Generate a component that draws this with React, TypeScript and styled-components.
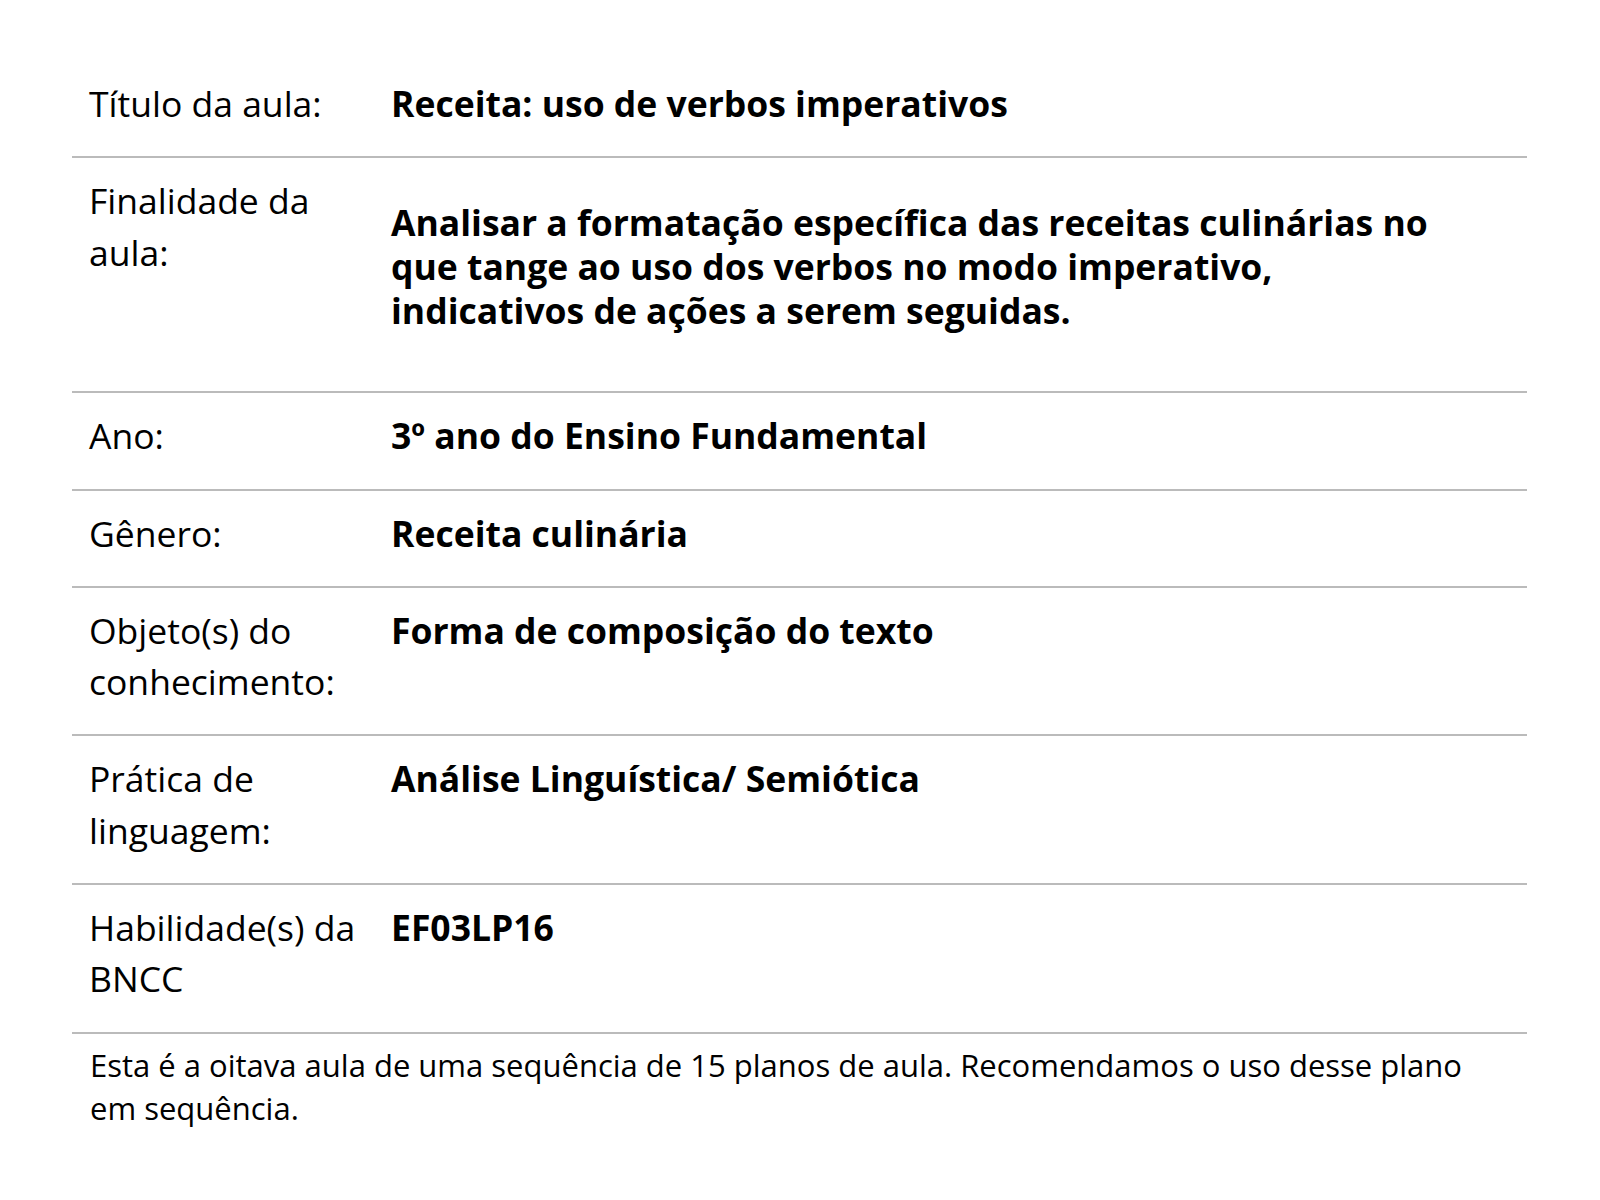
import styled, { createGlobalStyle } from 'styled-components';

type RowType = {
  label: string;
  value: string;
  spaced?: boolean;
};

const rows: RowType[] = [
  { label: 'Título da aula:', value: 'Receita: uso de verbos imperativos' },
  {
    label: 'Finalidade da aula:',
    value:
      'Analisar a formatação específica das receitas culinárias no que tange ao uso dos verbos no modo imperativo, indicativos de ações a serem seguidas.',
    spaced: true,
  },
  { label: 'Ano:', value: '3º ano do Ensino Fundamental' },
  { label: 'Gênero:', value: 'Receita culinária' },
  { label: 'Objeto(s) do conhecimento:', value: 'Forma de composição do texto' },
  { label: 'Prática de linguagem:', value: 'Análise Linguística/ Semiótica' },
  { label: 'Habilidade(s) da BNCC', value: 'EF03LP16' },
];

const GlobalStyle = createGlobalStyle`
  body {
    margin: 0;
    background: #ffffff;
    color: #000000;
    font-family: "Open Sans", "Noto Sans", sans-serif;
  }
`;

const App = () => {
  return (
    <>
      <GlobalStyle />
      <Page>
        <PlanTable>
          {rows.map(({ label, value, spaced }) => (
            <Row key={label}>
              <Label>{label}</Label>
              <Value $spaced={spaced}>{value}</Value>
            </Row>
          ))}
        </PlanTable>
        <Note>
          Esta é a oitava aula de uma sequência de 15 planos de aula. Recomendamos o uso desse
          plano em sequência.
        </Note>
      </Page>
    </>
  );
};

const Page = styled.main`
  padding: 61px 73px 60px 72px;
`;

const PlanTable = styled.section`
  display: flex;
  flex-direction: column;
`;

const Row = styled.div`
  display: grid;
  grid-template-columns: 303px 1fr;
  border-bottom: 2px solid #bbbbbb;
`;

const Label = styled.div`
  padding: 17px 12px 27px 17px;
  font-size: 35.5px;
  line-height: 51.3px;
  font-weight: 400;
`;

const Value = styled.div<{ $spaced?: boolean }>`
  padding: ${({ $spaced }) => ($spaced ? '42px 80px 59px 16px' : '20px 80px 27px 16px')};
  font-size: 35.5px;
  line-height: 44px;
  font-weight: 700;
`;

const Note = styled.p`
  margin: 0;
  padding: 10px 40px 0 18px;
  font-size: 31px;
  line-height: 43px;
`;

export default App;
